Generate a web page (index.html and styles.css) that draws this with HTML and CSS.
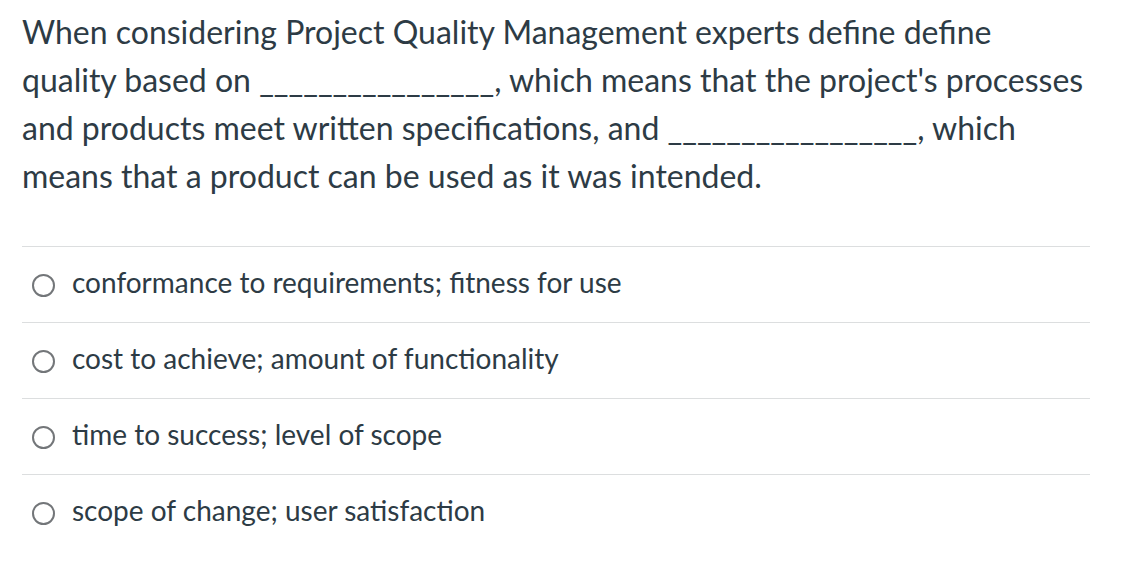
FILE: index.html
```html
<!DOCTYPE html>
<html>
<head>
<meta charset="utf-8">
<link rel="stylesheet" href="styles.css">
</head>
<body>
<div class="question">
  <p class="prompt">When considering Project Quality Management experts define define quality based on ________________, which means that the project's processes and products meet written specifications, and _________________, which means that a product can be used as it was intended.</p>
  <div class="answers">
    <label class="answer"><span class="radio"></span><span class="text">conformance to requirements; fitness for use</span></label>
    <label class="answer"><span class="radio"></span><span class="text">cost to achieve; amount of functionality</span></label>
    <label class="answer"><span class="radio"></span><span class="text">time to success; level of scope</span></label>
    <label class="answer"><span class="radio"></span><span class="text">scope of change; user satisfaction</span></label>
  </div>
</div>
</body>
</html>
```
FILE: styles.css
```css
html, body {
  margin: 0;
  padding: 0;
  background: #ffffff;
}
body {
  font-family: Lato, "Liberation Sans", sans-serif;
  color: #2d3b45;
}
.question {
  padding: 8px 36px 0 22px;
}
.prompt {
  margin: 0;
  font-size: 32px;
  line-height: 48px;
}
.answers {
  margin-top: 46px;
}
.answer {
  display: flex;
  align-items: center;
  box-sizing: border-box;
  height: 76px;
  padding-bottom: 6px;
  border-top: 1px solid #dcdedf;
  font-size: 28px;
}
.radio {
  width: 19px;
  height: 19px;
  border: 2px solid #737679;
  border-radius: 50%;
  margin: 7px 17px 0 10px;
  flex: none;
}
.answer .text {
  line-height: 1;
}
```
